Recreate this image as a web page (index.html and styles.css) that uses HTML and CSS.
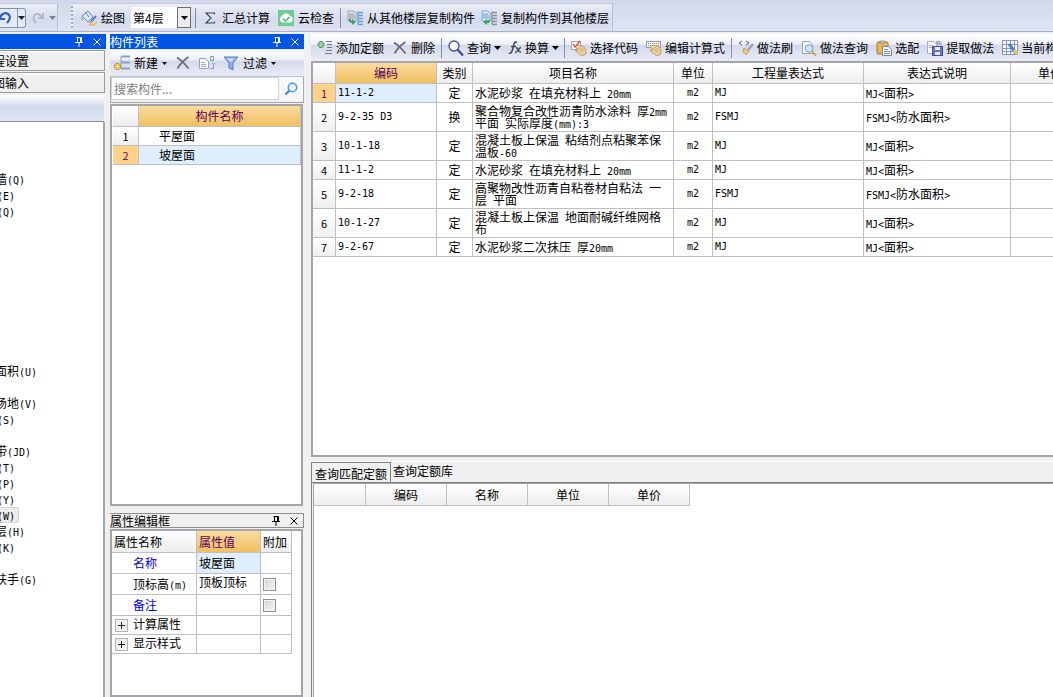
FILE: index.html
```html
<!DOCTYPE html>
<html lang="zh-CN">
<head>
<meta charset="utf-8">
<title>构件做法</title>
<link rel="stylesheet" href="styles.css">
</head>
<body>
<svg class="defs" aria-hidden="true">
  <symbol id="pin" viewBox="0 0 8 10"><path d="M1.500.5h5v5M2.500.5v5M5.500 1v4M0 5.500h8M4 6v4" fill="none" stroke="currentColor"/></symbol>
  <symbol id="close" viewBox="0 0 8 8"><path d="M.5.5l7 7M7.500.5l-7 7" fill="none" stroke="currentColor"/></symbol>
  <symbol id="down" viewBox="0 0 7 4"><path d="M0 0h7L3.500 4z" fill="currentColor"/></symbol>
  <symbol id="cross" viewBox="0 0 16 16"><path d="M2 2.500C6 5 10 9 13.500 13.500M13.500 2C9 5 5 9 2.500 13.500" fill="none" stroke="#6b6f76" stroke-width="1.800"/></symbol>
  <symbol id="floors" viewBox="0 0 16 16"><path d="M1 1h5l3 2v8H1z" fill="#e4e6ea" stroke="#8c9199" stroke-width=".8"/><path d="M2 4h5M2 6h6M2 8h6" stroke="#8c9199"/><path d="M11 1.500v13M11 2.500h5M11 5.500h5M11 8.500h5M11 11.500h5M11 14.500h5" stroke="#6f9bd6" stroke-width="1.300"/><path d="M2 9c0 3 1 4 3 4v2l4-3-4-3v2c-1 0-1-1-1-2z" fill="#36a566"/></symbol>
  <symbol id="floors2" viewBox="0 0 16 16"><path d="M1 1h5l3 2v8H1z" fill="#e6effb" stroke="#5c91d6" stroke-width=".8"/><path d="M2 4h5M2 6h6M2 8h6" stroke="#5c91d6"/><path d="M11 1.500v13M11 2.500h5M11 5.500h5M11 8.500h5M11 11.500h5M11 14.500h5" stroke="#8c9199" stroke-width="1.300"/><path d="M9 10c0 3-1 3-3 3v2l-4-3 4-3v2c1 0 1-1 1-1z" fill="#36a566"/></symbol>
  <symbol id="hand" viewBox="0 0 16 16"><path d="M4 7l3-2 5 1 3 4v4l-4 2-4-3-3-3h3z" fill="#efd09c" stroke="#a9875a" stroke-width=".7"/><path d="M7 8l4 4M9 7l4 4" stroke="#b99763" stroke-width=".8"/></symbol>
</svg>

<header class="topbar">
  <div class="bar history">
    <button class="undo" aria-label="撤销"><svg class="ic" viewBox="0 0 16 16"><path d="M2 3v6h6M3 8c1-4 5-6 8-4s2 6-1 9" fill="none" stroke="#315fc4" stroke-width="2.200"/></svg></button>
    <button class="undo-more" aria-label="撤销列表"><svg class="dn"><use href="#down"/></svg></button>
    <button class="redo" aria-label="重做"><svg class="ic" viewBox="0 0 16 16"><path d="M13 3v5H8M12 8C10 3 5 3 4 6s0 5 2 7" fill="none" stroke="#b4b9c6" stroke-width="2"/></svg></button>
    <button class="redo-more" aria-label="重做列表"><svg class="dn"><use href="#down"/></svg></button>
  </div>
  <div class="bar main-tools">
    <i class="grip"></i>
    <button class="tool"><svg class="ic" viewBox="0 0 16 16"><path d="M1 6l6-5 5 6-5 5z" fill="#dce5f5" stroke="#6f87b4"/><path d="M2 6c-2 2-1 4 0 4M4 2l4 5" stroke="#6f87b4" fill="none"/><path d="M15 6l-6 7" stroke="#5480c9" stroke-width="2"/><path d="M10 11l-2 4 4-2z" fill="#f0c24b"/><path d="M8 15h5l3-3" stroke="#e9b73c" fill="none" stroke-width="1.500"/></svg>绘图</button>
    <div class="floor"><select aria-label="楼层"><option>第4层</option></select><span class="floor-btn"><svg class="dn"><use href="#down"/></svg></span></div>
    <i class="sep"></i>
    <button class="tool sum"><svg class="ic" viewBox="0 0 16 16"><path d="M12.500 4.500V3H4l5 5-5 5h8.500v-1.500" fill="none" stroke="#3c4350" stroke-width="1.100"/></svg>汇总计算</button>
    <button class="tool"><svg class="ic" viewBox="0 0 16 16"><rect width="16" height="16" fill="#6fcb93"/><path d="M4 12.500a3.500 3.500 0 0 1 0-6.500 4.300 4.300 0 0 1 8 0 3.300 3.300 0 0 1 0 6.500z" fill="#fff"/><path d="M5 8.500L7.500 11 11.500 7" fill="none" stroke="#45b473" stroke-width="1.500"/></svg>云检查</button>
    <i class="sep"></i>
    <button class="tool"><svg class="ic"><use href="#floors"/></svg>从其他楼层复制构件</button>
    <button class="tool"><svg class="ic"><use href="#floors2"/></svg>复制构件到其他楼层</button>
  </div>
</header>

<main class="workspace">
  <aside class="nav">
    <div class="title active"><span></span><button aria-label="固定"><svg class="pin"><use href="#pin"/></svg></button><button aria-label="关闭"><svg class="cl"><use href="#close"/></svg></button></div>
    <button class="nav-tab">程设置</button>
    <button class="nav-tab">图输入</button>
    <div class="nav-strip"></div>
    <ul class="tree">
      <li></li><li></li><li></li>
      <li>墙<span class="m">(Q)</span></li>
      <li class="key"><span class="m">(E)</span></li>
      <li class="key"><span class="m">(Q)</span></li>
      <li></li><li></li><li></li><li></li><li></li><li></li><li></li><li></li><li></li>
      <li>面积<span class="m">(U)</span></li>
      <li></li>
      <li>场地<span class="m">(V)</span></li>
      <li class="key"><span class="m">(S)</span></li>
      <li></li>
      <li>带<span class="m">(JD)</span></li>
      <li class="key"><span class="m">(T)</span></li>
      <li class="key"><span class="m">(P)</span></li>
      <li class="key"><span class="m">(Y)</span></li>
      <li class="key picked"><span class="m">(W)</span></li>
      <li>层<span class="m">(H)</span></li>
      <li class="key"><span class="m">(K)</span></li>
      <li></li>
      <li>扶手<span class="m">(G)</span></li>
    </ul>
  </aside>

  <section class="middle">
    <div class="components">
      <div class="title active"><span>构件列表</span><button aria-label="固定"><svg class="pin"><use href="#pin"/></svg></button><button aria-label="关闭"><svg class="cl"><use href="#close"/></svg></button></div>
      <div class="list-tools">
        <button class="tool"><svg class="ic" viewBox="0 0 16 16"><path d="M7 1.500h9M7 7.500h9M7 13.500h9" stroke="#8ca0c2" stroke-width="2"/><path d="M7 2v12" stroke="#8ca0c2"/><path d="M3.500 8v7M0 11.500h7" stroke="#b59124" stroke-width="3.500"/><path d="M3.500 8.800v5.400M.8 11.500h5.400" stroke="#ffe06a" stroke-width="2"/></svg>新建<svg class="dn small"><use href="#down"/></svg></button>
        <button class="tool" aria-label="删除"><svg class="ic"><use href="#cross"/></svg></button>
        <button class="tool" aria-label="复制"><svg class="ic" viewBox="0 0 16 16"><path d="M.5 3.500h6l3 3v7h-9z" fill="#f4f5f8" stroke="#9aa3b5"/><path d="M2 7.500h4M2 9.500h5M2 11.500h5" stroke="#a9b0bf"/><path d="M11.500 1.500h3v4h-3zM11.500 13.500h3v-4M13 8l1.500 1.500L16 8" fill="none" stroke="#7d95c8"/></svg></button>
        <button class="tool"><svg class="ic" viewBox="0 0 16 16"><path d="M1 2h14l-5 6v7l-4-2V8z" fill="#8db4e8" stroke="#5180c7"/><path d="M4 3.500h7L8 7z" fill="#d4e5fa"/></svg>过滤<svg class="dn small"><use href="#down"/></svg></button>
      </div>
      <div class="search">
        <input type="text" placeholder="搜索构件..." aria-label="搜索构件">
        <button aria-label="搜索"><svg class="find" viewBox="0 0 14 14"><circle cx="8.500" cy="5.500" r="4.200" fill="#eef7ff" stroke="#4a9be0" stroke-width="1.600"/><path d="M5.500 8.500L1.500 12.500" stroke="#3f8fd6" stroke-width="2.400"/></svg></button>
      </div>
      <div class="frame">
        <table class="grid comp">
          <colgroup><col class="w26"><col></colgroup>
          <thead><tr><th></th><th class="hot">构件名称</th></tr></thead>
          <tbody>
            <tr><th>1</th><td>平屋面</td></tr>
            <tr class="sel"><th>2</th><td>坡屋面</td></tr>
          </tbody>
        </table>
      </div>
    </div>
    <div class="props">
      <div class="title"><span>属性编辑框</span><button aria-label="固定"><svg class="pin"><use href="#pin"/></svg></button><button aria-label="关闭"><svg class="cl"><use href="#close"/></svg></button></div>
      <div class="frame">
        <table class="grid prop">
          <colgroup><col class="w85"><col class="w64"><col class="w31"></colgroup>
          <thead><tr><th>属性名称</th><th class="hot">属性值</th><th>附加</th></tr></thead>
          <tbody>
            <tr><td class="name link">名称</td><td class="blue">坡屋面</td><td></td></tr>
            <tr><td class="name">顶标高<span class="m">(m)</span></td><td class="up">顶板顶标</td><td><input type="checkbox" aria-label="附加顶标高"></td></tr>
            <tr><td class="name link">备注</td><td></td><td><input type="checkbox" aria-label="附加备注"></td></tr>
            <tr class="low"><td><button class="plus" aria-label="展开计算属性"></button>计算属性</td><td></td><td></td></tr>
            <tr class="low"><td><button class="plus" aria-label="展开显示样式"></button>显示样式</td><td></td><td></td></tr>
          </tbody>
        </table>
      </div>
    </div>
  </section>

  <section class="right">
    <div class="work">
      <div class="work-tools">
        <button class="tool"><svg class="ic" viewBox="0 0 16 16"><path d="M4 1v7M.5 4.500h7" stroke="#5c9c6a" stroke-width="3.500"/><path d="M4 2v5M1.500 4.500h5" stroke="#a9d8ae" stroke-width="1.500"/><path d="M9 1.500h6M10 4.500h5M10 7.500h5M9 10.500h6M8 13.500h7" stroke="#757b85"/></svg>添加定额</button>
        <button class="tool"><svg class="ic"><use href="#cross"/></svg>删除</button>
        <i class="sep"></i>
        <button class="tool more"><svg class="ic" viewBox="0 0 16 16"><circle cx="6" cy="6" r="5" fill="#fafcff" stroke="#4b4fa8" stroke-width="1.300"/><path d="M9.500 9.500l5.500 6" stroke="#40449e" stroke-width="2.200"/></svg>查询<svg class="dn"><use href="#down"/></svg></button>
        <button class="tool more"><svg class="ic fx" viewBox="0 0 14 16"><path d="M9 2.500C6 1 6 4 5 8s-2 6-4 5M3 6.500h5M8 8c2-1 2 5 5 4M13 7.500c-2 0-3 5-6 5" fill="none" stroke="#454b56" stroke-width="1.500"/></svg>换算<svg class="dn"><use href="#down"/></svg></button>
        <i class="sep"></i>
        <button class="tool"><svg class="ic" viewBox="0 0 16 16"><rect x=".5" y="1.500" width="9" height="8" fill="#f6f6f8" stroke="#a6a9b2"/><path d="M2 4l2 3 5-6" fill="none" stroke="#d2473b" stroke-width="1.300"/><use href="#hand"/></svg>选择代码</button>
        <button class="tool"><svg class="ic" viewBox="0 0 16 16"><rect x=".5" y="1.500" width="14" height="6" fill="#f5f5f5" stroke="#999ca3"/><path d="M2 3.500h11M2 5.500h11" stroke="#8b8f98" stroke-dasharray="1 1"/><use href="#hand"/></svg>编辑计算式</button>
        <i class="sep"></i>
        <button class="tool"><svg class="ic" viewBox="0 0 16 16"><path d="M4 1L1 3l3 2M8 1l3 2-3 2" fill="none" stroke="#596071"/><path d="M15 4l-5 6" stroke="#8d9ec0" stroke-width="2"/><path d="M6 8l5 3-3 4-3-3z" fill="#f0ca72" stroke="#b38e43" stroke-width=".7"/></svg>做法刷</button>
        <button class="tool"><svg class="ic" viewBox="0 0 16 16"><path d="M1.500 1.500h7l3 3v9h-10z" fill="#f7f8fa" stroke="#9da5b5"/><circle cx="8" cy="8.500" r="3.800" fill="#cee7f7" stroke="#6fa2cf"/><path d="M11 11.500l4 4" stroke="#e0a23d" stroke-width="2"/></svg>做法查询</button>
        <button class="tool"><svg class="ic" viewBox="0 0 16 16"><rect x="1" y="2" width="11" height="12" rx="1" fill="#eab654" stroke="#a7782b"/><path d="M4 3V1h5v2z" fill="#c7ccd6" stroke="#7e8490" stroke-width=".7"/><path d="M6.500 6.500h6l3 3v6h-9z" fill="#f2f6fc" stroke="#7388ad"/><path d="M8 9.500h4M8 11.500h6M8 13.500h6" stroke="#8193b3"/></svg>选配</button>
        <button class="tool"><svg class="ic" viewBox="0 0 16 16"><path d="M.5 1.500h6l3 3v9h-9z" fill="#f7f8fb" stroke="#a7aec0"/><path d="M2 5.500h4M2 7.500h4" stroke="#a7aec0"/><path d="M10 3c0-2 5-2 4 2M10 1v3h3" fill="none" stroke="#667dac"/><rect x="5.500" y="6.500" width="10" height="9" fill="#6a76bb" stroke="#454f92"/><path d="M8 7h5v3H8zM8 12h5v3H8z" fill="#e8ebf7"/></svg>提取做法</button>
        <button class="tool"><svg class="ic" viewBox="0 0 16 16"><path d="M.5.5h15v14H.5zM.5 4.500h15M.5 8.500h12M.5 11.500h15M4.500.5v14M8.500.5v14M12.500.5v14" fill="#fff" stroke="#6d80ba" stroke-width=".8"/><path d="M7 4l6 8" stroke="#4e7fd0" stroke-width="3"/><path d="M12 10l3.500 4" stroke="#efc261" stroke-width="3"/></svg>当前构件</button>
      </div>
      <div class="frame">
        <table class="grid items">
          <colgroup><col class="w23"><col class="w101"><col class="w36"><col class="w201"><col class="w39"><col class="w151"><col class="w147"><col class="w79"></colgroup>
          <thead><tr><th></th><th class="hot">编码</th><th>类别</th><th>项目名称</th><th>单位</th><th>工程量表达式</th><th>表达式说明</th><th>单价</th></tr></thead>
          <tbody>
            <tr class="first"><th>1</th><td class="m">11-1-2</td><td>定</td><td>水泥砂浆&ensp;在填充材料上&ensp;<span class="m">20mm</span></td><td class="m">m2</td><td class="m">MJ</td><td><span class="m">MJ&lt;</span>面积<span class="m">&gt;</span></td><td></td></tr>
            <tr class="tall"><th>2</th><td class="m">9-2-35 D3</td><td>换</td><td>聚合物复合改性沥青防水涂料&ensp;厚<span class="m">2mm</span><br>平面&ensp;实际厚度<span class="m">(mm):3</span></td><td class="m">m2</td><td class="m">FSMJ</td><td><span class="m">FSMJ&lt;</span>防水面积<span class="m">&gt;</span></td><td></td></tr>
            <tr class="tall"><th>3</th><td class="m">10-1-18</td><td>定</td><td>混凝土板上保温&ensp;粘结剂点粘聚苯保<br>温板<span class="m">-60</span></td><td class="m">m2</td><td class="m">MJ</td><td><span class="m">MJ&lt;</span>面积<span class="m">&gt;</span></td><td></td></tr>
            <tr><th>4</th><td class="m">11-1-2</td><td>定</td><td>水泥砂浆&ensp;在填充材料上&ensp;<span class="m">20mm</span></td><td class="m">m2</td><td class="m">MJ</td><td><span class="m">MJ&lt;</span>面积<span class="m">&gt;</span></td><td></td></tr>
            <tr class="tall"><th>5</th><td class="m">9-2-18</td><td>定</td><td>高聚物改性沥青自粘卷材自粘法&ensp;一<br>层&ensp;平面</td><td class="m">m2</td><td class="m">FSMJ</td><td><span class="m">FSMJ&lt;</span>防水面积<span class="m">&gt;</span></td><td></td></tr>
            <tr class="tall"><th>6</th><td class="m">10-1-27</td><td>定</td><td>混凝土板上保温&ensp;地面耐碱纤维网格<br>布</td><td class="m">m2</td><td class="m">MJ</td><td><span class="m">MJ&lt;</span>面积<span class="m">&gt;</span></td><td></td></tr>
            <tr><th>7</th><td class="m">9-2-67</td><td>定</td><td>水泥砂浆二次抹压&ensp;厚<span class="m">20mm</span></td><td class="m">m2</td><td class="m">MJ</td><td><span class="m">MJ&lt;</span>面积<span class="m">&gt;</span></td><td></td></tr>
          </tbody>
        </table>
      </div>
    </div>
    <div class="lookup">
      <div class="tabs"><button class="on">查询匹配定额</button><button>查询定额库</button></div>
      <div class="pane"><div class="frame">
        <table class="grid query">
          <colgroup><col class="w52"><col class="w81"><col class="w81"><col class="w81"><col class="w81"></colgroup>
          <thead><tr><th></th><th>编码</th><th>名称</th><th>单位</th><th>单价</th></tr></thead>
        </table>
      </div></div>
    </div>
  </section>
</main>
</body>
</html>
```
FILE: styles.css
```css
* { box-sizing: border-box; }
html, body { height: 100%; }
body {
  margin: 0;
  display: flex;
  flex-direction: column;
  overflow: hidden;
  background: #f0f0f0;
  color: #000;
  font: 12px/16px "Noto Sans CJK SC", sans-serif;
}
button { margin: 0; padding: 0; border: 0; background: none; font: inherit; color: inherit; }
.defs { display: none; }
.m { font-family: "DejaVu Sans Mono", "Noto Sans CJK SC", monospace; font-size: 10px; }
span.m { line-height: 1px; }
.ic { width: 16px; height: 16px; flex: none; }
.fx { width: 14px; }
.dn { width: 7px; height: 4px; flex: none; }
.dn.small { width: 5px; height: 3px; }
.sep { width: 1px; height: 20px; margin: 0 2px; background: #868d9b; flex: none; }
.tool { display: flex; align-items: center; gap: 4px; padding: 0 4px; white-space: nowrap; flex: none; }

/* Top toolbar */
.topbar {
  display: flex;
  flex: none;
  height: 32px;
  padding-top: 3px;
  border-bottom: 1px solid #a7b1c5;
  background: linear-gradient(#d2d8eb, #e0e5f3);
}
.bar { display: flex; align-items: center; background: linear-gradient(#eaedf7, #d5dbed 60%, #dfe3f1); border-top: 1px solid #c4cad9; }
.history { width: 58px; border-right: 1px solid #b9c0d0; color: #7c8493; }
.undo, .undo-more { display: flex; align-items: center; height: 20px; border: 1px solid #8994ab; background: #e3e9f7; }
.undo { width: 18px; border-left: 0; padding-right: 4px; justify-content: flex-end; }
.undo-more { width: 8px; border-left: 0; border-radius: 0 3px 3px 0; color: #222; }
.redo { width: 18px; height: 16px; margin-left: 3px; }
.redo-more { display: flex; margin-left: 2px; }
.main-tools { margin-left: 13px; padding-right: 1px; border-right: 1px solid #b9c0d0; }
.main-tools .tool:last-child { padding: 0 2px; }
.grip { width: 2px; height: 24px; margin-right: 4px; background: repeating-linear-gradient(#a3abbd 0 2px, #e9edf6 2px 4px); }
.floor { position: relative; width: 60px; height: 21px; margin: 0 2px; }
.floor select { width: 100%; height: 100%; padding: 0 2px; border: 0; appearance: none; background: #fff; font: inherit; color: #000; }
.floor-btn { position: absolute; top: 0; right: 0; bottom: 0; width: 14px; display: flex; align-items: center; justify-content: center; border: 1px solid #6f6f6f; background: #ececec; pointer-events: none; }

/* Columns */
.workspace { flex: 1; min-height: 0; display: grid; grid-template-columns: 106px 194px minmax(0, 1fr); column-gap: 4px; padding-top: 2px; }
.title { display: flex; align-items: center; flex: none; gap: 10px; height: 15px; padding-right: 5px; border: 1px solid #8d8d8d; border-left: 0; }
.title span { flex: 1; }
.title button { display: flex; }
.title.active { border: 0; background: #0055e5; color: #fff; }
.pin { width: 8px; height: 10px; }
.cl { width: 8px; height: 8px; }
.frame { flex: 1; min-height: 0; overflow: hidden; margin-right: 1px; border: 2px solid #a5a5ab; background: #fff; }

/* Left navigation */
.nav { display: flex; flex-direction: column; min-height: 0; overflow: hidden; }
.nav-tab { flex: none; height: 21px; width: 105px; margin-top: 1px; border: 1px solid #9b9b9b; border-left: 0; text-align: left; text-indent: -7px; box-shadow: inset 0 1px #fff; }
.nav-strip { flex: none; width: 104px; height: 27px; margin-top: 2px; border-bottom: 1px solid #868b98; background: linear-gradient(#fff, #d2d9ec 45%, #e3e7f4); }
.tree { flex: 1; width: 105px; margin: 0; padding: 1px 0 0; overflow: hidden; list-style: none; background: #fff; border-right: 2px solid #a5a5b0; }
.tree li { width: max-content; height: 16px; margin-left: -5px; white-space: nowrap; }
.tree .key { margin-left: -3px; }
.tree .picked { padding-right: 4px; border-radius: 3px; background: #ececec; box-shadow: inset 0 0 0 1px #d4d4d4; }

/* Component list and properties */
.middle { display: flex; flex-direction: column; min-height: 0; }
.components { flex: 473; display: flex; flex-direction: column; min-height: 0; }
.props { flex: 184; display: flex; flex-direction: column; min-height: 0; margin-top: 7px; }
.props .title { margin-bottom: 1px; }
.list-tools, .work-tools { display: flex; align-items: center; flex: none; background: linear-gradient(#fff, #eceff8 38%, #d3d9ec 42%, #e9ecf6); }
.list-tools { height: 27px; margin-top: 1px; border-bottom: 1px solid #c1c6d2; }
.search { display: flex; flex: none; height: 26px; padding-bottom: 1px; border: 1px solid #a9a9a9; border-top: 0; }
.search input { flex: 1; min-width: 0; height: 23px; padding: 0 2px; border: 1px solid #ccd3dd; background: #fff; font: inherit; }
.search input::placeholder { color: #808080; opacity: 1; }
.search button { display: flex; align-items: center; justify-content: center; width: 24px; background: #f7f7f7; }
.find { width: 14px; height: 14px; }
.components .frame { margin-top: 1px; }

/* Grids */
.grid { table-layout: fixed; border-collapse: separate; border-spacing: 0; line-height: 12px; }
.grid th, .grid td { height: 19px; padding: 0 2px; border: 0 solid #c0c0c0; border-width: 0 1px 1px 0; font-weight: 400; text-align: left; white-space: nowrap; overflow: hidden; }
.grid thead th { text-align: center; background: linear-gradient(#fff, #ededed); }
.grid tbody th { padding: 0; text-align: center; font-size: 11px; background: linear-gradient(#fff, #efefef); }
.grid thead .hot { color: #60005c; background: linear-gradient(#fadc9f, #f0bf60); }
.grid .sel th, .grid .first th { color: #60005c; background: #ffd28a; }
.grid .sel td, .grid .first th + td, .grid .blue { background: #dfeeff; }
.w23 { width: 23px; } .w26 { width: 26px; } .w31 { width: 31px; } .w36 { width: 36px; } .w39 { width: 39px; }
.w52 { width: 52px; } .w64 { width: 64px; } .w81 { width: 81px; } .w85 { width: 85px; } .w79 { width: 79px; }
.w101 { width: 101px; } .w147 { width: 147px; } .w151 { width: 151px; } .w201 { width: 201px; }
.comp { width: 188px; margin-left: 1px; }
.comp thead th { height: 21px; }
.comp td { padding-left: 20px; }
.prop { width: 180px; }
.prop thead th { height: 22px; text-align: left; }
.prop td { height: 21px; }
.prop .low td { height: 19px; }
.prop .name { padding-left: 21px; }
.prop .link { color: #0000f0; }
.prop .up { vertical-align: top; padding-top: 2px; }
.prop input { display: block; appearance: none; width: 13px; height: 13px; margin: 0; border: 1px solid #8e8f8f; background: linear-gradient(135deg, #cfd3d9, #f8f8f8); box-shadow: inset 0 0 0 1px #f4f4f4; }
.plus { width: 13px; height: 13px; margin: 0 5px 0 1px; border: 1px solid #b4b4b4; vertical-align: middle; background: linear-gradient(#222, #222) center / 7px 1px no-repeat, linear-gradient(#222, #222) center / 1px 7px no-repeat, #f0f0f0; }

/* Work area */
.right { display: flex; flex-direction: column; min-height: 0; min-width: 0; padding-left: 3px; }
.work { flex: 424; display: flex; flex-direction: column; min-height: 0; }
.work-tools { height: 27px; padding-left: 2px; overflow: hidden; }
.work-tools .tool { gap: 3px; }
.work-tools .more { padding-right: 3px; }
.work .frame, .lookup .frame { margin-right: 0; border-right: 0; }
.items { width: 777px; }
.items thead th { height: 21px; }
.items .tall td { height: 29px; }
.items td:nth-child(3), .items td:nth-child(5) { text-align: center; }
.lookup { flex: 235; display: flex; flex-direction: column; min-height: 0; margin-top: 4px; border-top: 1px solid #fff; }
.tabs { display: flex; flex: none; height: 20px; }
.tabs button { padding: 0 2px 3px; }
.tabs .on { width: 80px; padding: 3px 2px 0; border: 1px solid #808080; border-bottom: 0; }
.pane { flex: 1; min-height: 0; display: flex; border: 1px solid #808080; border-right: 0; border-bottom: 0; }
.pane .frame { margin-left: 1px; border-width: 1px 0 0 1px; }
.query { width: 376px; }
.query thead th { height: 22px; }
```
